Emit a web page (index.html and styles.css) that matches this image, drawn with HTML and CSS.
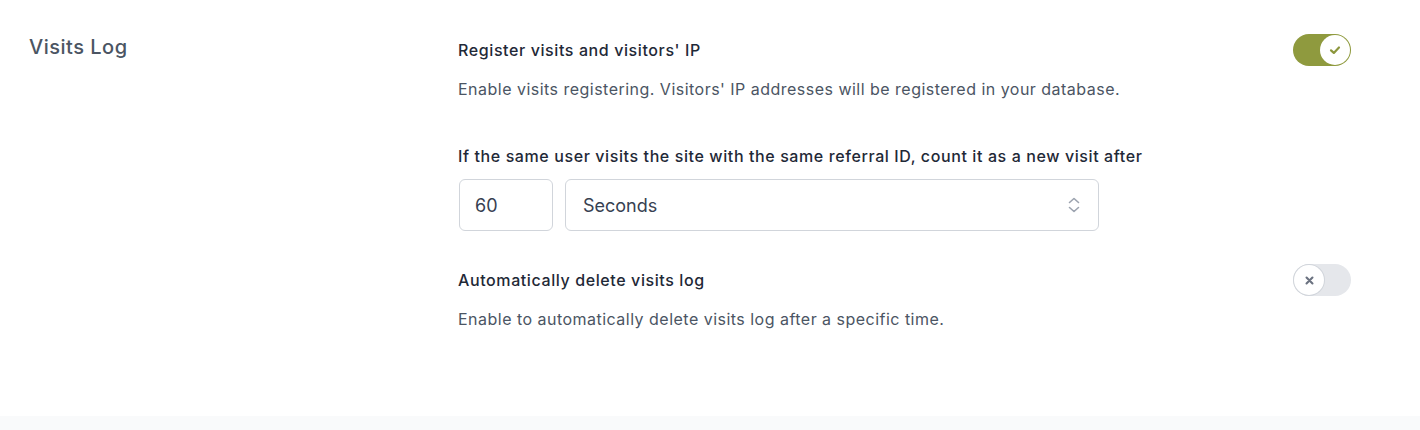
FILE: index.html
```html
<!DOCTYPE html>
<html>
<head>
<meta charset="utf-8">
<link rel="stylesheet" href="styles.css">
</head>
<body>
<div class="page">
  <section class="section">
    <h2 class="section-title">Visits Log</h2>
    <div class="fields">
      <div class="field">
        <div class="field-head">
          <span class="label">Register visits and visitors' IP</span>
          <span class="toggle on">
            <span class="knob">
              <svg width="14" height="14" viewBox="0 0 12 12"><path d="M2.6 6.3 L5 8.5 L9.4 3.9" fill="none" stroke="#8c963c" stroke-width="1.9" stroke-linecap="round" stroke-linejoin="round"/></svg>
            </span>
          </span>
        </div>
        <p class="desc">Enable visits registering. Visitors' IP addresses will be registered in your database.</p>
      </div>
      <div class="field gap-a">
        <div class="label">If the same user visits the site with the same referral ID, count it as a new visit after</div>
        <div class="inputs">
          <div class="num">60</div>
          <div class="select">
            <span>Seconds</span>
            <svg width="12" height="16" viewBox="0 0 12 16"><path d="M1.5 5.5 L6 1.5 L10.5 5.5 M1.5 10.5 L6 14.5 L10.5 10.5" fill="none" stroke="#9ca3af" stroke-width="1.6" stroke-linecap="round" stroke-linejoin="round"/></svg>
          </div>
        </div>
      </div>
      <div class="field gap-b">
        <div class="field-head">
          <span class="label">Automatically delete visits log</span>
          <span class="toggle off">
            <span class="knob">
              <svg width="11" height="11" viewBox="0 0 10 10"><path d="M2.3 2.3 L7.7 7.7 M7.7 2.3 L2.3 7.7" fill="none" stroke="#6b7280" stroke-width="1.9" stroke-linecap="round"/></svg>
            </span>
          </span>
        </div>
        <p class="desc">Enable to automatically delete visits log after a specific time.</p>
      </div>
    </div>
  </section>
  <div class="footer-strip"></div>
</div>
</body>
</html>
```
FILE: styles.css
```css
* { box-sizing: border-box; }
html, body { margin: 0; padding: 0; background: #ffffff; }
body { font-family: Inter, "Noto Sans", sans-serif; color: #1f2937; }
.page { width: 1420px; height: 430px; display: flex; flex-direction: column; }
.section { flex: 1; display: flex; padding: 34px 69px 0 29px; }
.section-title { margin: 0; width: 429px; font-size: 20px; font-weight: 500; color: #4b5563; line-height: 26px; letter-spacing: 0.5px; }
.fields { flex: 1; display: flex; flex-direction: column; }
.gap-a { margin-top: 39px; }
.gap-b { margin-top: 33px; }
.field-head { display: flex; justify-content: space-between; align-items: center; }
.label { font-size: 16px; font-weight: 500; color: #1f2937; line-height: 32px; letter-spacing: 0.6px; }
.desc { margin: 11px 0 0; font-size: 16px; color: #4b5563; line-height: 24px; letter-spacing: 0.48px; }
.inputs { display: flex; gap: 12px; margin-top: 7px; margin-left: 1px; }
.num, .select { height: 52px; border: 1px solid #d1d5db; border-radius: 6px; font-size: 18px; color: #374151; display: flex; align-items: center; padding: 0 17px; }
.num { width: 94px; padding-left: 15px; }
.select { width: 534px; justify-content: space-between; padding-right: 18px; }
.toggle { width: 58px; height: 32px; border-radius: 16px; display: flex; align-items: center; padding: 1px; }
.toggle.on { background: #8f9a3e; justify-content: flex-end; }
.toggle.off { background: #e5e7eb; justify-content: flex-start; }
.knob { width: 30px; height: 30px; border-radius: 50%; background: #fff; display: flex; align-items: center; justify-content: center; }
.toggle.off .knob { box-shadow: 0 0 0 1px #d1d5db; }
.footer-strip { height: 14px; background: #f9fafb; }
```
